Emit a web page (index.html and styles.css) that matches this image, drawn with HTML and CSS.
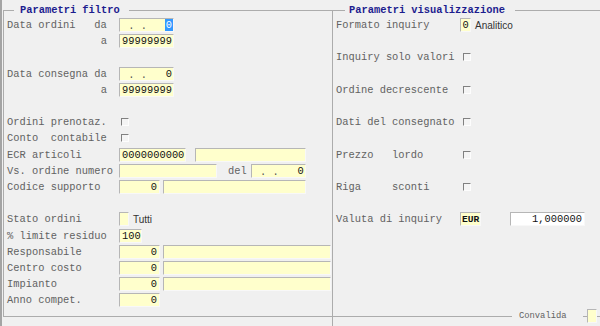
FILE: index.html
```html
<!DOCTYPE html>
<html lang="it">
<head>
  <meta charset="UTF-8" />
  <meta name="viewport" content="width=device-width, initial-scale=1.0" />
  <title>Parametri inquiry ordini</title>
  <link rel="stylesheet" href="styles.css">
</head>
<body>
  <div class="screen">

    <!-- filtri -->
    <fieldset class="panel filters">
      <legend>Parametri filtro</legend>
      <div class="grid">
        <div class="row"><span class="lbl">Data ordini   da</span><span class="fld date w-date"><span class="mask"> . .</span><span class="sel">0</span></span></div>
        <div class="row"><span class="lbl right">a</span><span class="fld w-date">99999999</span></div>
        <div class="row"></div>
        <div class="row"><span class="lbl">Data consegna da</span><span class="fld date w-date"><span class="mask"> . .</span><span>0</span></span></div>
        <div class="row"><span class="lbl right">a</span><span class="fld w-date">99999999</span></div>
        <div class="row"></div>
        <div class="row"><span class="lbl">Ordini prenotaz.</span><span class="chk"></span></div>
        <div class="row"><span class="lbl">Conto  contabile</span><span class="chk"></span></div>
        <div class="row"><span class="lbl">ECR articoli</span><span class="fld w-ecr">0000000000</span><span class="fld w-ecr-desc"></span></div>
        <div class="row"><span class="lbl">Vs. ordine numero</span><span class="fld w-vs"></span><span class="del">del</span><span class="fld date w-del"><span class="mask"> . .</span><span>0</span></span></div>
        <div class="row"><span class="lbl">Codice supporto</span><span class="fld num w-code">0</span><span class="fld w-code-desc"></span></div>
        <div class="row"></div>
        <div class="row"><span class="lbl">Stato ordini</span><span class="fld w-flag"></span><span class="opt">Tutti</span></div>
        <div class="row"><span class="lbl">% limite residuo</span><span class="fld w-pct">100</span></div>
        <div class="row"><span class="lbl">Responsabile</span><span class="fld num w-code">0</span><span class="fld w-long-desc"></span></div>
        <div class="row"><span class="lbl">Centro costo</span><span class="fld num w-code">0</span><span class="fld w-long-desc"></span></div>
        <div class="row"><span class="lbl">Impianto</span><span class="fld num w-code">0</span><span class="fld w-long-desc"></span></div>
        <div class="row"><span class="lbl">Anno compet.</span><span class="fld num w-code">0</span></div>
      </div>
    </fieldset>

    <!-- visualizzazione -->
    <fieldset class="panel view">
      <legend>Parametri visualizzazione</legend>
      <div class="view-body">
        <div class="grid wide">
          <div class="row"><span class="lbl">Formato inquiry</span><span class="fld center w-one">0</span><span class="opt">Analitico</span></div>
          <div class="row"></div>
          <div class="row"><span class="lbl">Inquiry solo valori</span><span class="chk"></span></div>
          <div class="row"></div>
          <div class="row"><span class="lbl">Ordine decrescente</span><span class="chk"></span></div>
          <div class="row"></div>
          <div class="row"><span class="lbl">Dati del consegnato</span><span class="chk"></span></div>
          <div class="row"></div>
          <div class="row"><span class="lbl">Prezzo   lordo</span><span class="chk"></span></div>
          <div class="row"></div>
          <div class="row"><span class="lbl">Riga     sconti</span><span class="chk"></span></div>
          <div class="row"></div>
          <div class="row"><span class="lbl">Valuta di inquiry</span><span class="fld bold w-cur">EUR</span><span class="fld num white w-rate">1,000000</span></div>
        </div>

        <div class="confirm">
          <span class="confirm-text">Convalida</span>
          <span class="tick"></span>
          <span class="fld confirm-box"></span>
        </div>
      </div>
    </fieldset>

  </div>
</body>
</html>
```

FILE: styles.css
```css
html,
body {
  margin: 0;
  height: 326px;
  overflow: hidden;
}

body {
  background: #f0f0f0;
  font-family: "Liberation Mono", "Courier New", monospace;
  font-size: 10.4px;
  color: #626262;
}

.screen {
  display: flex;
  height: 326px;
  border-left: 2px solid #a4a4a4;
  box-sizing: border-box;
}


/* group boxes */
.panel {
  margin: 4px 0 0 0;
  padding: 0;
  min-width: 0;
  border: 1px solid #acacac;
  box-sizing: border-box;
}

.panel legend {
  font-weight: bold;
  color: #1d1d8f;
  line-height: 12px;
}

.filters {
  margin-left: 1px;
  width: 329px;
  height: 313px;
  border-right: none;
  padding-left: 3px;
}

.filters legend {
  margin-left: 7px;
  padding: 0 9px 0 6px;
}

.view {
  flex: 1;
  height: 330px;
  border-right: none;
  border-bottom: none;
}

.view legend {
  margin-left: 12px;
  padding: 0 10px 0 4px;
}

.view-body {
  display: flex;
  flex-direction: column;
  height: 307px;
}


/* rows */
.grid {
  display: grid;
  grid-auto-rows: 16.2px;
  padding-top: 1px;
}

.grid.wide {
  padding-left: 3px;
}

.row {
  display: flex;
  align-items: center;
}

.lbl {
  flex: none;
  width: 112px;
  white-space: pre;
}

.lbl.right {
  text-align: right;
  padding-right: 12px;
  box-sizing: border-box;
}

.wide .lbl {
  width: 124px;
}


/* fields */
.fld {
  flex: none;
  display: flex;
  align-items: center;
  height: 14px;
  box-sizing: border-box;
  padding: 0 2px;
  background: #ffffcc;
  border: 1px solid;
  border-color: #b6b6b6 #f8f8f8 #f8f8f8 #b6b6b6;
  color: #111;
  white-space: pre;
  overflow: hidden;
}

.fld.num {
  justify-content: flex-end;
}

.fld.center {
  justify-content: center;
  padding: 0;
}

.fld.date {
  justify-content: space-between;
  padding-right: 1px;
}

.fld.bold {
  font-weight: bold;
  font-size: 9.6px;
  padding: 0 1px;
}

.fld.white {
  background: #fff;
}

.mask {
  align-self: flex-end;
  line-height: 10px;
  color: #555;
}

.sel {
  align-self: stretch;
  display: flex;
  align-items: center;
  margin-right: -1px;
  padding: 0 1px;
  background: #3399ff;
  color: #fff;
}

.w-date { width: 55px; }
.w-ecr { width: 67px; }
.w-ecr-desc { width: 111px; margin-left: 9px; }
.w-vs { width: 98px; }
.w-del { width: 55px; }
.w-code { width: 41px; }
.w-code-desc { width: 143px; margin-left: 3px; }
.w-long-desc { width: 168px; margin-left: 3px; }
.w-flag { width: 10px; }
.w-pct { width: 23px; }
.w-one { width: 11px; }
.w-cur { width: 21px; }
.w-rate { width: 75px; margin-left: 29px; }

.del {
  margin: 0 4px 0 11px;
}

.opt {
  margin-left: 4px;
  font-family: "Liberation Sans", Arial, sans-serif;
  font-size: 10px;
  color: #333;
}

.chk {
  flex: none;
  width: 8px;
  height: 8px;
  margin-left: 2px;
  box-sizing: border-box;
  border: 1px solid;
  border-color: #808080 #fdfdfd #fdfdfd #808080;
  background: #f4f4f4;
}

.wide .chk {
  margin-left: 3px;
}


/* bottom confirm */
.confirm {
  display: flex;
  align-items: center;
  height: 14px;
  margin-top: auto;
}

.confirm::before {
  content: "";
  width: 179px;
  border-top: 1px solid #acacac;
  margin-right: 7px;
}

.confirm::after {
  content: "";
  flex: 1;
  border-top: 1px solid #acacac;
}

.confirm-text {
  font-size: 8.8px;
  margin-right: 16px;
}

.tick {
  width: 4px;
  border-top: 1px solid #acacac;
}

.confirm-box {
  width: 10px;
}
```
